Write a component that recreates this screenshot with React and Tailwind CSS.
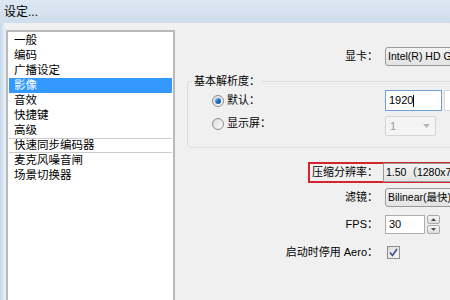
import React from 'react';

const items = ['一般', '编码', '广播设定', '影像', '音效', '快捷键', '高级', '快速同步编码器', '麦克风噪音闸', '场景切换器'];

function Radio({ checked }) {
    return (
        <span className="w-[12px] h-[12px] shrink-0 rounded-full border border-[#8a8c8e] bg-gradient-to-br from-[#dcdcdc] to-[#fbfbfb] flex items-center justify-center">
            {checked && <span className="w-[6px] h-[6px] rounded-full bg-gradient-to-br from-[#9cd1f5] via-[#1f6fc2] to-[#154a8a]" />}
        </span>
    );
}

function Combo({ children, className = '' }) {
    return (
        <div className={`shrink-0 h-[19px] rounded-[3px] border border-[#9a9a9a] bg-gradient-to-b from-[#f3f3f3] to-[#e3e3e3] pl-[2px] text-[10.5px] leading-[17px] whitespace-nowrap overflow-hidden ${className}`}>
            {children}
        </div>
    );
}

export default function App() {
    return (
        <div className="w-[450px] h-[300px] overflow-hidden flex flex-col bg-[#f0f0f0] text-black text-[12px] font-['Liberation_Sans','Noto_Sans_CJK_SC',sans-serif]">
            {/* title bar */}
            <div className="h-[23px] shrink-0 bg-gradient-to-b from-[#dce7f3] to-[#d0ddec] pl-[4px] flex items-center">设定...</div>

            <div className="flex-1 flex min-h-0">
                <div className="w-[6px] shrink-0 bg-gradient-to-r from-[#c4d6eb] via-[#dae6f3] to-[#eef3f9]" />

                {/* category list */}
                <div className="w-[169px] shrink-0 mt-[7px] border-2 border-b-0 border-[#b9b9b9] bg-white pt-[1px] px-[1px] text-[11.5px]">
                    {items.map((it, i) => (
                        <div key={it} className={`h-[15px] pl-[5px] whitespace-nowrap ${i === 3 ? 'bg-[#3399ff] text-white leading-[15px]' : ''} ${i === 7 ? 'border-y border-[#cdcdcd] leading-[13px]' : 'leading-[15px]'}`}>{it}</div>
                    ))}
                </div>

                {/* settings panel */}
                <div className="flex-1 flex flex-col pt-[24px] min-w-0 text-[11px] whitespace-nowrap">
                    <div className="flex items-center h-[19px]">
                        <div className="w-[203px] shrink-0 text-right">显卡：</div>
                        <Combo className="ml-[7px] w-[90px]">Intel(R) HD Graphics</Combo>
                    </div>

                    <fieldset className="ml-[12px] mt-[8px] w-[300px] shrink-0 border border-[#d5dfe5] rounded-[3px] pb-[11px]">
                        <legend className="ml-[4px] px-[2px] leading-[14px]">基本解析度：</legend>
                        <div className="flex items-center h-[21px] mt-[2px]">
                            <div className="w-[197px] shrink-0 flex items-center pl-[24px]">
                                <Radio checked />
                                <span className="ml-[3px]">默认：</span>
                            </div>
                            <div className="w-[57px] h-[21px] shrink-0 border border-[#6f9fd6] bg-white pl-[3px] leading-[19px] flex items-center">
                                1920<span className="w-px h-[12px] bg-black" />
                            </div>
                            <div className="ml-[2px] w-[40px] h-[21px] shrink-0 border border-[#d9d9d9] bg-white" />
                        </div>
                        <div className="flex items-center h-[20px] mt-[5px]">
                            <div className="w-[197px] shrink-0 flex items-center pl-[24px] mb-[5px]">
                                <Radio />
                                <span className="ml-[3px]">显示屏：</span>
                            </div>
                            <div className="w-[51px] h-[20px] shrink-0 rounded-[2px] border border-[#d5d5d5] bg-[#f4f4f4] pl-[4px] text-[#9a9a9a] flex items-center justify-between pr-[5px]">
                                1
                                <svg width="7" height="4" viewBox="0 0 7 4"><path d="M0 0h7L3.5 4z" fill="#b8b8b8" /></svg>
                            </div>
                        </div>
                    </fieldset>

                    <div className="ml-[133px] mt-[14px] h-[21px] w-[200px] shrink-0 border-2 border-[#d2262c] flex items-center">
                        <div className="w-[68px] shrink-0 text-right">压缩分辨率：</div>
                        <Combo className="ml-[5px] w-[90px] h-[17px] leading-[15px] rounded-none">1.50（1280x720）</Combo>
                    </div>

                    <div className="flex items-center h-[19px] mt-[5px]">
                        <div className="w-[203px] shrink-0 text-right">滤镜：</div>
                        <Combo className="ml-[7px] w-[90px]">Bilinear(最快)</Combo>
                    </div>

                    <div className="flex items-center h-[19px] mt-[8px]">
                        <div className="w-[203px] shrink-0 text-right">FPS：</div>
                        <div className="ml-[7px] w-[40px] h-[19px] shrink-0 border border-[#abadb3] bg-white pl-[3px] leading-[17px]">30</div>
                        <div className="ml-[2px] w-[13px] h-[19px] shrink-0 flex flex-col gap-px">
                            <div className="flex-1 border border-[#a9a9a9] rounded-[2px] bg-gradient-to-b from-[#f6f6f6] to-[#dedede] flex items-center justify-center">
                                <svg width="5" height="3" viewBox="0 0 5 3"><path d="M2.5 0L5 3H0z" fill="#4d4d4d" /></svg>
                            </div>
                            <div className="flex-1 border border-[#a9a9a9] rounded-[2px] bg-gradient-to-b from-[#f6f6f6] to-[#dedede] flex items-center justify-center">
                                <svg width="5" height="3" viewBox="0 0 5 3"><path d="M0 0h5L2.5 3z" fill="#4d4d4d" /></svg>
                            </div>
                        </div>
                    </div>

                    <div className="flex items-center h-[16px] mt-[10px]">
                        <div className="w-[203px] shrink-0 text-right">启动时停用 Aero：</div>
                        <div className="ml-[9px] w-[13px] h-[13px] shrink-0 border border-[#8e8f8f] bg-gradient-to-br from-[#dcdcdc] to-[#f8f8f8] flex items-center justify-center">
                            <svg width="9" height="9" viewBox="0 0 9 9"><path d="M1 4.5L3.5 7.5L8 1" fill="none" stroke="#3a4f8e" strokeWidth="1.6" /></svg>
                        </div>
                    </div>
                </div>
            </div>
        </div>
    );
}
